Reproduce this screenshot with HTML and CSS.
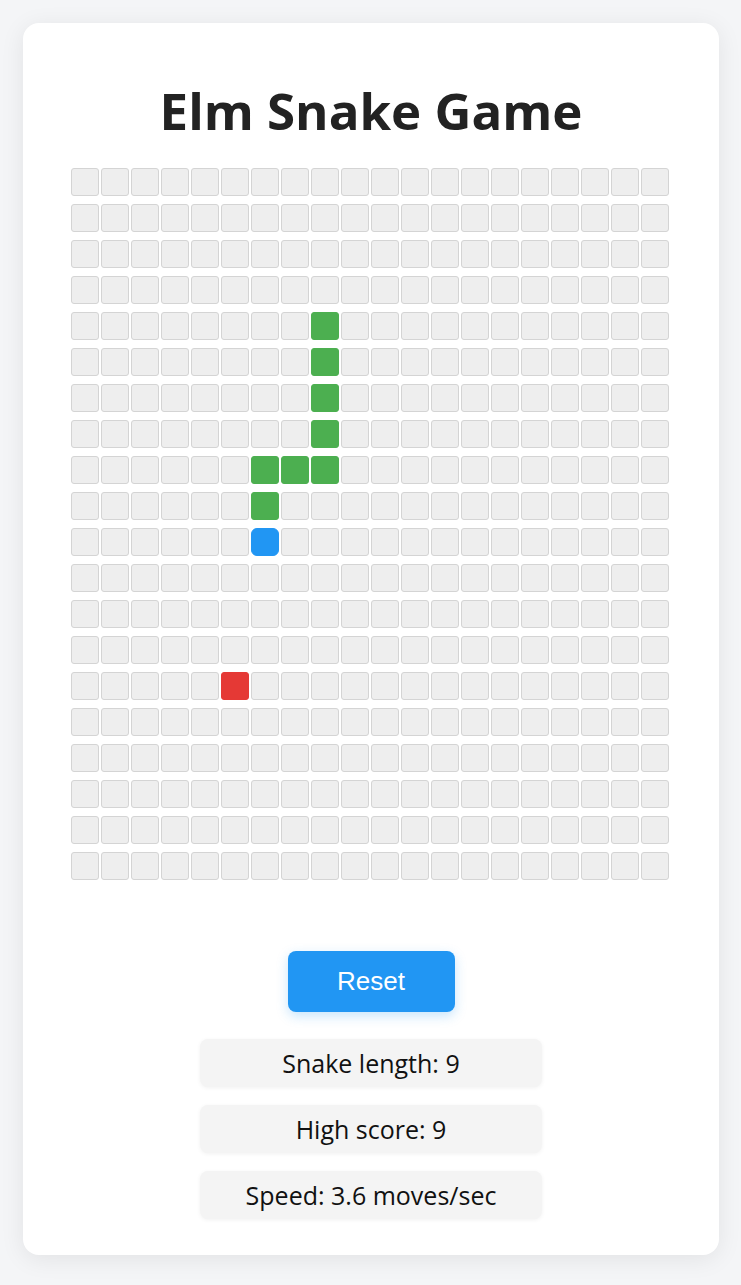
FILE: index.html
```html
<!DOCTYPE html>
<html lang="en">
<head>
  <meta charset="UTF-8">
  <meta name="viewport" content="width=device-width, initial-scale=1.0">
  <link rel="stylesheet" href="styles.css">
  <title>Elm Snake Game</title>
</head>
<body>
  <div class="game">
    <h1 class="title">Elm Snake Game</h1>
    <div class="board" id="board"></div>
    <button class="reset">Reset</button>
    <div class="stat">Snake length: 9</div>
    <div class="stat">High score: 9</div>
    <div class="stat">Speed: 3.6 moves/sec</div>
  </div>

<script>
  const board = document.getElementById('board');
  const snake = [[8,4],[8,5],[8,6],[8,7],[8,8],[7,8],[6,8],[6,9]];
  const head = [6,10];
  const food = [5,14];

  for(let y=0; y<20; y++){
    for(let x=0; x<20; x++){
      const cell = document.createElement('div');
      cell.className = 'cell';
      if(snake.some(p => p[0]==x && p[1]==y)) cell.classList.add('snake');
      if(head[0]==x && head[1]==y) cell.classList.add('head');
      if(food[0]==x && food[1]==y) cell.classList.add('food');
      board.append(cell);
    }
  }
</script>
</body>
</html>
```

FILE: styles.css
```css
body{
  margin:0; padding:23px 22px 31px 23px;
  background:#f4f5f7;
  font-family:"Open Sans", "Noto Sans", sans-serif;
}

.game{
  background:#fff; border-radius:16px;
  box-shadow:0 4px 24px rgba(0,0,0,0.08);
  padding:58px 0 36px;
  display:flex; flex-direction:column; align-items:center;
}

.title{
  margin:0 0 29px; font-size:51px; line-height:58px; font-weight:700; color:#222;
}

.board{
  display:grid; grid-template-columns:repeat(20, 28px); grid-auto-rows:28px;
  column-gap:2px; row-gap:8px;
  margin:0 2px 71px 0;
}

.cell{
  box-sizing:border-box; border:1px solid #d4d4d4; border-radius:3px;
  background:#eee;
}
.cell.snake{ background:#4caf50; border-color:#4caf50; }
.cell.head{ background:#2196f3; border-color:#2196f3; border-radius:6px; }
.cell.food{ background:#e53935; border-color:#e53935; }

.reset{
  width:167px; height:61px; margin-bottom:27px;
  background:#2196f3; color:#fff; border:none; border-radius:8px;
  font-family:"Liberation Sans", Arial, sans-serif; font-size:26px;
  box-shadow:0 4px 12px rgba(33,150,243,0.25);
}

.stat{
  width:342px; height:48px; margin-bottom:18px;
  display:flex; align-items:center; justify-content:center;
  background:#f4f4f4; border-radius:8px;
  box-shadow:0 1px 4px rgba(0,0,0,0.06);
  font-size:25px; color:#111;
}
.stat:last-child{ margin-bottom:0; }
```
